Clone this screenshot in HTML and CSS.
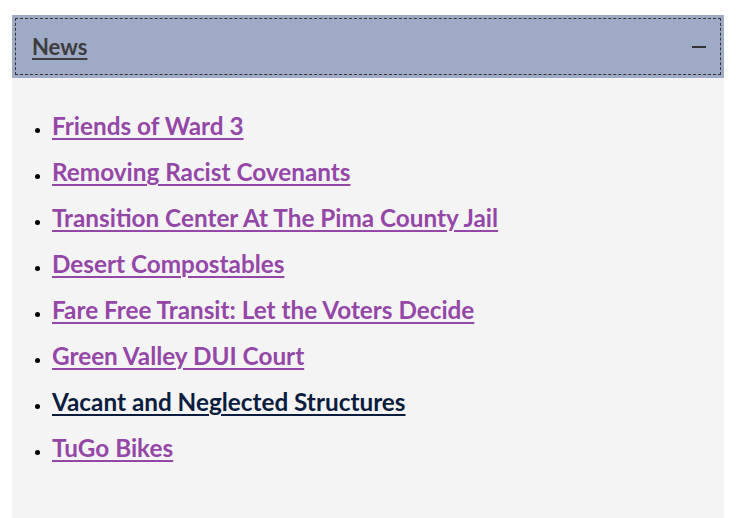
FILE: index.html
```html
<!DOCTYPE html>
<html lang="en">
<head>
  <meta charset="UTF-8" />
  <meta name="viewport" content="width=device-width, initial-scale=1.0"/>
  <title>News</title>
  <link rel="stylesheet" href="styles.css">
</head>
<body>
  <div class="panel">
    <div class="panel-head">
      <a href="#" class="panel-title">News</a>
      <span class="toggle"></span>
    </div>
    <div class="panel-body">
      <ul class="news-list">
        <li><a href="#">Friends of Ward 3</a></li>
        <li><a href="#">Removing Racist Covenants</a></li>
        <li><a href="#">Transition Center At The Pima County Jail</a></li>
        <li><a href="#">Desert Compostables</a></li>
        <li><a href="#">Fare Free Transit: Let the Voters Decide</a></li>
        <li><a href="#">Green Valley DUI Court</a></li>
        <li><a href="#" class="hover">Vacant and Neglected Structures</a></li>
        <li><a href="#">TuGo Bikes</a></li>
      </ul>
    </div>
  </div>
</body>
</html>
```

FILE: styles.css
```css
body {
  margin: 0;
  padding: 15px 18px 0 12px;
  background: #fff;
  font-family: Lato, 'Open Sans', sans-serif;
}

.panel {
  width: 712px;
}

.panel-head {
  height: 63px;
  background: #9faac6;
  display: flex;
  align-items: center;
  justify-content: space-between;
  padding: 0 18px 0 20px;
  box-sizing: border-box;
  outline: 1px dashed #333;
  outline-offset: -4px;
}

.panel-title {
  font-size: 22px;
  font-weight: 700;
  color: #3d3d3d;
  text-decoration: underline;
  text-decoration-thickness: 2px;
  text-underline-offset: 3px;
}

.toggle {
  width: 14px;
  height: 2px;
  background: #333;
}

.panel-body {
  background: #f4f4f4;
  height: 440px;
  padding-top: 28px;
  box-sizing: border-box;
}

.news-list {
  margin: 0;
  padding-left: 40px;
  font-size: 16px;
}

.news-list li {
  line-height: 46px;
}

.news-list a {
  font-size: 24.3px;
  font-weight: 700;
  line-height: 1;
  color: #9547a8;
  text-decoration: underline;
  text-decoration-thickness: 2px;
  text-underline-offset: 3px;
}

.news-list a.hover {
  color: #0b1d3f;
}
```
